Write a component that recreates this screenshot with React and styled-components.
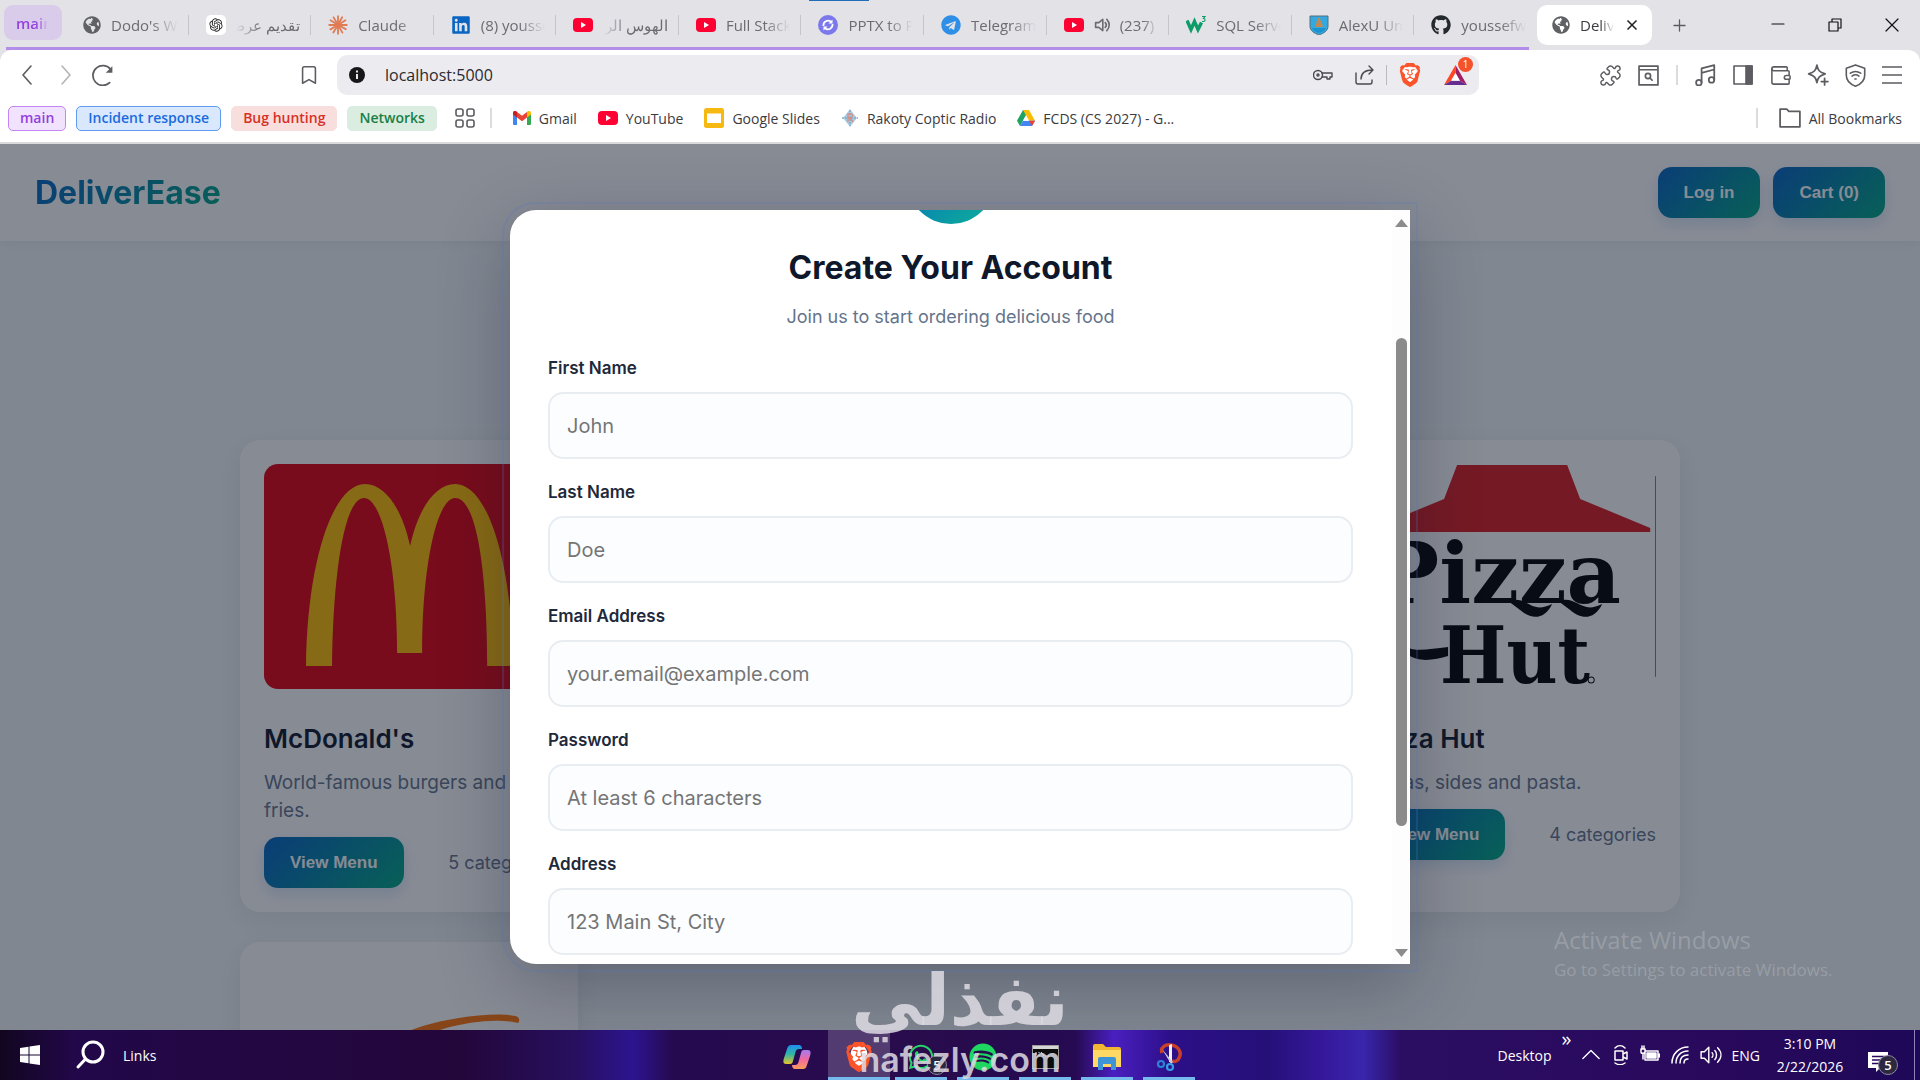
import React from 'react';
import styled, { createGlobalStyle, css } from 'styled-components';
import { Bookmark, Puzzle, Wallet, Plus, X } from 'lucide-react';
import { FaGithub, FaLinkedin, FaTelegram, FaWhatsapp, FaSpotify, FaGlobeAmericas } from 'react-icons/fa';
import { RiOpenaiFill } from 'react-icons/ri';
import { SiBrave } from 'react-icons/si';

const uiFont = '"Open Sans", "Noto Sans", sans-serif';
const pageFont = 'Inter, sans-serif';
const brandGradient = 'linear-gradient(135deg, #0563c4, #00a884)';

const GlobalStyle = createGlobalStyle`
	* {
		box-sizing: border-box;
	}
	body {
		margin: 0;
		overflow: hidden;
		font-family: ${uiFont};
	}
	button, input {
		font-family: inherit;
	}
	h1, h2, h3, p {
		margin: 0;
	}
	svg {
		display: block;
		flex-shrink: 0;
	}
`;

const Screen = styled.div`
	height: 100vh;
	display: flex;
	flex-direction: column;
	overflow: hidden;
	position: relative;
	background-color: #e3e2e7;
`;

/* ---------- tab strip ---------- */
const TabStrip = styled.div`
	height: 50px;
	display: flex;
	align-items: stretch;
	position: relative;
	flex-shrink: 0;
`;
const GroupChip = styled.button`
	width: 58px;
	height: 35px;
	margin: 5px 4px 0;
	padding: 0 14px 0 12px;
	display: flex;
	align-items: center;
	border: none;
	border-radius: 9px;
	background-color: #d9cbea;
	color: #9540e2;
	font-size: 15px;
	font-weight: 600;
`;
const GroupTabs = styled.div`
	flex: 0 1 1471px;
	display: flex;
	min-width: 0;
`;
const GroupLine = styled.div`
	position: absolute;
	left: 6px;
	right: 391px;
	bottom: 0;
	height: 3px;
	background-color: #b28ee8;
`;
const LoadLine = styled.div`
	position: absolute;
	left: 809px;
	top: 0;
	width: 60px;
	height: 1px;
	background-color: #1f6db8;
`;
const fade = css`
	mask-image: linear-gradient(${(p) => (p.$rtl ? 'to left' : 'to right')}, #000 60%, transparent);
`;
const Tab = styled.button`
	flex: 1 1 0;
	min-width: 0;
	height: 20px;
	margin-top: 15px;
	padding: 0 10px 0 17px;
	display: flex;
	align-items: center;
	gap: 10px;
	border: none;
	border-right: 1px solid ${(p) => (p.$last ? 'transparent' : '#c6c5cb')};
	background: none;
	color: #6b6b70;
	font-size: 15px;
`;
const TabTitle = styled.span`
	flex: 1;
	min-width: 0;
	overflow: hidden;
	white-space: nowrap;
	direction: ${(p) => (p.$rtl ? 'rtl' : 'ltr')};
	text-align: ${(p) => (p.$rtl ? 'right' : 'left')};
	${fade}
`;
const ActiveTab = styled.div`
	width: 115px;
	height: 40px;
	margin-top: 5px;
	padding: 0 12px 0 15px;
	display: flex;
	align-items: center;
	gap: 10px;
	border-radius: 10px;
	background-color: #fff;
	color: #3c3c40;
	font-size: 15px;
`;
const BareButton = styled.button`
	width: ${(p) => p.$w || 20}px;
	padding: 0;
	display: flex;
	align-items: center;
	justify-content: center;
	border: none;
	background: none;
	color: ${(p) => p.$color || '#5c5c61'};
`;
const NewTab = styled.div`
	height: 40px;
	margin: 5px 0 0 17px;
	display: flex;
`;
const WindowButtons = styled.div`
	height: 40px;
	margin: 5px 0 0 auto;
	display: flex;
`;

/* ---------- toolbar ---------- */
const Toolbar = styled.div`
	height: 50px;
	padding: 0 17px 0 16px;
	display: flex;
	align-items: center;
	flex-shrink: 0;
	border-radius: 12px 12px 0 0;
	background-color: #fff;
`;
const NavButtons = styled.div`
	display: flex;
	gap: 16px;
`;
const BookmarkSlot = styled.div`
	margin: 0 18px 0 auto;
`;
const AddressBar = styled.div`
	flex: 0 1 1142px;
	height: 40px;
	padding: 0 12px 0 12px;
	display: flex;
	align-items: center;
	border-radius: 10px;
	background-color: #ecebf0;
`;
const Url = styled.input`
	flex: 1;
	min-width: 0;
	margin-left: 20px;
	padding: 0;
	border: none;
	outline: none;
	background: none;
	color: #2a2a2e;
	font-size: 16px;
`;
const AddressTools = styled.div`
	display: flex;
	align-items: center;
	gap: 22px;
	color: #4a4a4f;
`;
const Divider = styled.span`
	width: ${(p) => p.$w || 1}px;
	height: 20px;
	background-color: ${(p) => p.$color || '#b9b9be'};
`;
const AddressDivider = styled(Divider)`
	margin: 0 -11px;
`;
const ToolbarDivider = styled(Divider)`
	margin: 0 2px;
`;
const BatWrap = styled.span`
	position: relative;
	display: block;
`;
const BatBadge = styled.span`
	position: absolute;
	left: 14px;
	top: -8px;
	width: 15px;
	height: 15px;
	border-radius: 50%;
	background-color: #f5512c;
	color: #fff;
	font-size: 10px;
	line-height: 15px;
	text-align: center;
`;
const ToolbarRight = styled.div`
	flex: 0 0 auto;
	margin-left: 120px;
	display: flex;
	align-items: center;
	gap: 15px;
`;

/* ---------- bookmarks ---------- */
const Bookmarks = styled.div`
	height: 44px;
	padding: 0 18px 6px 8px;
	display: flex;
	align-items: center;
	flex-shrink: 0;
	border-bottom: 2px solid #dadadd;
	background-color: #fff;
`;
const BookmarkGroup = styled.button`
	height: 25px;
	margin-right: 10px;
	padding: 0 11px;
	border: 1px solid ${(p) => p.$line};
	border-radius: 5px;
	background-color: ${(p) => p.$fill};
	color: ${(p) => p.$ink};
	font-size: 14px;
	font-weight: 600;
	line-height: 20px;
	white-space: nowrap;
`;
const BookmarkLink = styled.a`
	margin-left: 21px;
	display: flex;
	align-items: center;
	gap: 8px;
	color: #3b3b40;
	font-size: 14px;
	text-decoration: none;
	white-space: nowrap;
`;
const AllBookmarks = styled.div`
	margin-left: auto;
	display: flex;
	align-items: center;
`;
const GridSlot = styled.div`
	margin: 0 15px 0 8px;
`;

/* ---------- web page ---------- */
const Stage = styled.div`
	flex: 1;
	min-height: 0;
	position: relative;
	overflow: hidden;
	background-color: #f1f7f8;
	font-family: ${pageFont};
`;
const Header = styled.header`
	padding: 23px 35px;
	display: flex;
	align-items: center;
	gap: 13px;
	background-color: #fff;
	box-shadow: 0 2px 12px rgba(15, 23, 42, 0.06);
`;
const Brand = styled.h1`
	margin-right: auto;
	background: ${brandGradient};
	background-clip: text;
	color: transparent;
	font-size: 32px;
	font-weight: 700;
	line-height: 36px;
`;
const Button = styled.button`
	height: 51px;
	padding: 0 26px;
	border: none;
	border-radius: 14px;
	background: ${brandGradient};
	box-shadow: 0 6px 16px rgba(5, 99, 196, 0.16);
	color: #fff;
	font-family: 'Liberation Sans', sans-serif;
	font-size: 17px;
	font-weight: 700;
	white-space: nowrap;
`;
const Grid = styled.main`
	max-width: 1440px;
	margin: 199px auto 0;
	display: grid;
	grid-template-columns: repeat(4, 1fr);
	gap: 30px 29px;
`;
const Card = styled.article`
	grid-column: ${(p) => p.$column};
	padding: 24px;
	border-radius: 20px;
	background-color: #fff;
	box-shadow: 0 8px 28px rgba(15, 23, 42, 0.08);
`;
const Photo = styled.div`
	height: 225px;
	border-radius: 14px;
	overflow: hidden;
	background-color: ${(p) => p.$fill || '#fff'};
`;
const CardTitle = styled.h3`
	margin-top: 33px;
	color: #0f172a;
	font-size: 26px;
	font-weight: 600;
	line-height: 34px;
`;
const CardText = styled.p`
	margin-top: 13px;
	padding-right: 8px;
	color: #64748b;
	font-size: 19px;
	line-height: 28px;
`;
const CardFoot = styled.div`
	margin-top: 12px;
	display: flex;
	align-items: center;
	justify-content: space-between;
	color: #64748b;
	font-size: 18px;
`;

/* ---------- modal ---------- */
const Overlay = styled.div`
	position: absolute;
	inset: 0;
	display: flex;
	align-items: center;
	justify-content: center;
	background-color: rgba(15, 23, 42, 0.5);
`;
const Modal = styled.section`
	width: 100%;
	max-width: 900px;
	height: 85%;
	display: flex;
	border-radius: 26px 0 0 26px;
	background-color: #fff;
	box-shadow: 0 20px 70px rgba(15, 23, 42, 0.3);
	outline: 2px solid rgba(80, 120, 200, 0.22);
	outline-offset: 6px;
`;
const ModalBody = styled.form`
	flex: 1;
	min-width: 0;
	padding: 0 39px 0 38px;
	overflow: hidden;
`;
const Avatar = styled.div`
	width: 88px;
	height: 88px;
	margin: -74px auto 0;
	border-radius: 50%;
	background: linear-gradient(135deg, #0563c4, #0ca2a0 80%);
`;
const ModalTitle = styled.h2`
	margin-top: 22px;
	color: #0f172a;
	font-size: 32px;
	font-weight: 700;
	line-height: 44px;
	text-align: center;
`;
const ModalText = styled.p`
	margin-top: 13px;
	color: #64748b;
	font-size: 18px;
	line-height: 28px;
	text-align: center;
`;
const Fields = styled.div`
	margin-top: 25px;
	display: flex;
	flex-direction: column;
	gap: 21px;
`;
const Field = styled.div`
	display: flex;
	flex-direction: column;
	gap: 11px;
`;
const Label = styled.label`
	color: #1e293b;
	font-size: 17px;
	font-weight: 600;
	line-height: 25px;
`;
const TextBox = styled.input`
	width: 100%;
	height: 67px;
	padding: 0 17px;
	border: 2px solid #e8edf2;
	border-radius: 15px;
	outline: none;
	background-color: #fbfdff;
	font-size: 20px;
	&::placeholder {
		color: #757575;
	}
`;
const ScrollTrack = styled.div`
	width: 18px;
	padding: 9px 3px 7px 4px;
	display: flex;
	flex-direction: column;
	align-items: center;
	justify-content: space-between;
	background-color: #fdfdfd;
`;
const ScrollThumbArea = styled.div`
	flex: 1;
	width: 11px;
	padding: 111px 0 123px;
`;
const ScrollThumb = styled.div`
	height: 100%;
	border-radius: 6px;
	background-color: #8b8b8b;
`;

/* ---------- marks over the screen ---------- */
const Activate = styled.div`
	position: absolute;
	right: 82px;
	bottom: 48px;
	width: 284px;
	color: rgba(255, 255, 255, 0.2);
	font-family: ${uiFont};
	font-size: 17px;
	line-height: 25px;
	white-space: nowrap;
`;
const ActivateTitle = styled.div`
	font-size: 24px;
	line-height: 34px;
`;
const Watermark = styled.div`
	position: absolute;
	left: 0;
	right: 0;
	bottom: 0;
	height: 120px;
	display: flex;
	flex-direction: column;
	align-items: center;
	color: rgba(222, 220, 228, 0.85);
	pointer-events: none;
`;
const WatermarkArabic = styled.div`
	font-family: 'DejaVu Sans', sans-serif;
	font-size: 71px;
	font-weight: 700;
	line-height: 82px;
	white-space: nowrap;
`;
const WatermarkLatin = styled.div`
	font-family: Inter, sans-serif;
	font-size: 34px;
	font-weight: 600;
	line-height: 36px;
`;

/* ---------- taskbar ---------- */
const Taskbar = styled.footer`
	height: 50px;
	display: flex;
	align-items: stretch;
	flex-shrink: 0;
	background: linear-gradient(90deg, #12061f 0, #22084a 4%, #230745 10%, #23063a 24%, #27105f 30%, #2c1490 33%, #260a50 35%, #280c4c 48%, #260a52 56%, #4a1fc0 58%, #2c0f88 61%, #251078 66%, #36189c 69%, #3826ac 71%, #2b0d62 73%, #28095c 90%, #1e0858 100%);
	color: #fff;
	font-size: 14px;
`;
const TaskLeft = styled.div`
	flex: 1;
	padding-left: 20px;
	display: flex;
	align-items: center;
`;
const SearchSlot = styled.div`
	margin: 0 18px 0 35px;
`;
const TaskApps = styled.div`
	padding-left: 26px;
	display: flex;
	align-items: stretch;
`;
const TaskApp = styled.button`
	width: 62px;
	padding: 0 ${(p) => (p.$active ? 0 : 5)}px;
	border: none;
	position: relative;
	display: flex;
	flex-direction: column;
	align-items: center;
	justify-content: space-between;
	background-color: ${(p) => (p.$active ? 'rgba(255, 255, 255, 0.2)' : 'transparent')};
	&::before {
		content: '';
		height: 7px;
	}
	&::after {
		content: '';
		width: 100%;
		height: 3px;
		background-color: ${(p) => (p.$open ? '#76b9ed' : 'transparent')};
	}
`;
const Count = styled.span`
	position: absolute;
	left: ${(p) => p.$x}px;
	top: ${(p) => p.$y}px;
	width: 20px;
	height: 20px;
	border: 1px solid #8a86a0;
	border-radius: 50%;
	background-color: #2b2840;
	color: #fff;
	font-size: 13px;
	font-weight: 600;
	line-height: 18px;
	text-align: center;
`;
const Tray = styled.div`
	flex: 1;
	display: flex;
	align-items: center;
	justify-content: flex-end;
	gap: 10px;
`;
const Clock = styled.div`
	width: 80px;
	line-height: 23px;
	text-align: center;
`;
const More = styled.span`
	align-self: flex-start;
	font-size: 20px;
	line-height: 18px;
`;
const Notice = styled.button`
	position: relative;
	width: 44px;
	height: 50px;
	padding: 13px 0 0 8px;
	border: none;
	background: none;
`;
const ShowDesktop = styled.div`
	width: 6px;
	height: 50px;
	border-left: 1px solid #8d84b5;
`;

/* ---------- icons ---------- */
function Line({ size = 20, w = 1.6, children, color = 'currentColor', box = 20 }) {
	return (
		<svg width={size} height={size} viewBox={`0 0 ${box} ${box}`} fill="none" stroke={color} strokeWidth={w} strokeLinecap="round" strokeLinejoin="round">
			{children}
		</svg>
	);
}

function YouTubeIcon() {
	return (
		<svg width="20" height="20" viewBox="0 0 20 20">
			<rect y="3" width="20" height="14" rx="4" fill="#ff0033" />
			<path d="M8 7l5 3-5 3z" fill="#fff" />
		</svg>
	);
}

function ClaudeIcon() {
	const rays = [0, 28, 58, 90, 118, 150, 180, 212, 240, 270, 302, 330];
	return (
		<Line color="#e07b53" w={1.8}>
			{rays.map((a) => (
				<path key={a} d="M10 10V1.2" transform={`rotate(${a} 10 10)`} />
			))}
		</Line>
	);
}

function OpenAiIcon() {
	return (
		<svg width="20" height="20" viewBox="0 0 20 20">
			<rect width="20" height="20" rx="5" fill="#fff" />
			<RiOpenaiFill x="2" y="2" size={16} color="#222" />
		</svg>
	);
}

function ConvertIcon() {
	return (
		<svg width="20" height="20" viewBox="0 0 20 20" fill="none">
			<circle cx="10" cy="10" r="10" fill="#7b78ec" />
			<path d="M5.5 11a4.6 4.6 0 0 1 7.5-4.2M14.5 9a4.6 4.6 0 0 1-7.5 4.2" stroke="#fff" strokeWidth="1.8" />
			<path d="M14.5 4.5v4h-4zM5.5 15.5v-4h4z" fill="#fff" />
		</svg>
	);
}

function SchoolsIcon() {
	return (
		<svg width="20" height="20" viewBox="0 0 20 20" fill="none" stroke="#0d9c68">
			<path d="M1 5.5l4 9 3.500-8 3.500 8 3.500-7" strokeWidth="3.4" />
			<path d="M16 1.500h3l-1.500 2c2 0 2 3 0 3h-1.500" strokeWidth="1.200" />
		</svg>
	);
}

function CrestIcon() {
	return (
		<svg width="20" height="20" viewBox="0 0 20 20">
			<path d="M1 1h18v10c0 5-4 7-9 9-5-2-9-4-9-9z" fill="#35a9df" stroke="#55707e" />
			<path d="M9 3h2l.5 3h1v3h1v3h-7V9h1V6h1z" fill="#c08a52" />
			<path d="M3 13h14c-1 3-4 4-7 5-3-1-6-2-7-5z" fill="#1a93cf" />
		</svg>
	);
}

function GmailIcon() {
	return (
		<svg width="18" height="14" viewBox="0 0 18 14">
			<path d="M0 2.500V13a1 1 0 0 0 1 1h3V5z" fill="#4285f4" />
			<path d="M18 2.500V13a1 1 0 0 1-1 1h-3V5z" fill="#34a853" />
			<path d="M0 2c0-2 2-2.600 3.400-1.500L9 4.700 14.600.5 14 6.500l-5 3.800-5-3.800z" fill="#ea4335" />
			<path d="M14 1l.6-.5C16 -.6 18 0 18 2v1.500l-4 3z" fill="#fbbc04" />
			<path d="M0 2v1.500l4 3V1L3.400.5C2-.6 0 0 0 2z" fill="#c5221f" />
		</svg>
	);
}

function SlidesIcon() {
	return (
		<svg width="20" height="20" viewBox="0 0 20 20">
			<rect width="20" height="20" rx="2.500" fill="#f5b912" />
			<rect x="3" y="5.500" width="14" height="9.500" fill="#fff" />
		</svg>
	);
}

function RakotyIcon() {
	return (
		<svg width="18" height="20" viewBox="0 0 18 20">
			<path d="M9 1l3 4 4 5-4 5-3 4-3-4-4-5 4-5z" fill="#a9cbe0" />
			<path d="M1 10h16M9 2v16" stroke="#7faecb" strokeWidth="1.500" strokeDasharray="2 1" />
			<path d="M7 14V6h2.500c2.500 0 2.500 3.500 0 4H7M9 10l3 4" stroke="#d88f86" strokeWidth="1.400" fill="none" />
		</svg>
	);
}

function DriveIcon() {
	return (
		<svg width="18" height="16" viewBox="0 0 18 16">
			<path d="M6 0h6l-3 5.300L3 16 0 10.700z" fill="#1ea362" />
			<path d="M6 0h6l6 10.700h-6z" fill="#fbbc04" />
			<path d="M3 16l3-5.300h12L15 16z" fill="#4285f4" />
			<path d="M18 10.700L15 16l-3-5.300z" fill="#ea4335" />
			<path d="M9 5.300l3 5.400H6z" fill="#fff" />
		</svg>
	);
}

function BraveIcon({ size }) {
	return (
		<svg width={size} height={size} viewBox="0 0 24 24">
			<ellipse cx="12" cy="11" rx="7" ry="9" fill="#fff" />
			<SiBrave size={24} color="#fb542b" />
		</svg>
	);
}

function BatIcon() {
	return (
		<svg width="23" height="20" viewBox="0 0 23 20">
			<path d="M11.500 0L0 20l7.500-4.500L11.500 8z" fill="#ff4724" />
			<path d="M0 20h23l-7.500-4.500h-8z" fill="#662d91" />
			<path d="M11.500 0L23 20l-7.500-4.500L11.500 8z" fill="#9e1f63" />
			<path d="M11.500 8l4.500 7.800H7z" fill="#fff" />
		</svg>
	);
}

function ArchesArt() {
	return (
		<svg width="100%" height="225" viewBox="0 0 290 225" preserveAspectRatio="xMidYMid slice">
			<path
				d="M42 202C43 100 68 20 101 20c20 0 37 25 45 62 8-37 25-62 45-62 33 0 57 80 58 182h-26c0-92-10-168-32-168-18 0-33 66-33 155h-25c0-89-15-155-33-155-20 0-31 76-32 168z"
				fill="#ffbd00"
			/>
		</svg>
	);
}

function HutArt() {
	return (
		<svg width="100%" height="225" viewBox="0 0 290 225" preserveAspectRatio="xMidYMid slice">
			<path d="M91 1h110l13 34 70 29v4H8v-4l70-29z" fill="#db1d20" />
			<g fontWeight="700">
				<text x="10" y="139" fontSize="84" fontFamily="'DejaVu Serif', serif">Pizza</text>
				<text x="74" y="219" fontSize="78" fontFamily="'DejaVu Serif Condensed', 'DejaVu Serif', serif">Hut</text>
			</g>
			<path d="M142 137c20-6 22 14 44 3-8 17-22 15-32 6zM192 137c20-6 22 14 44 3-8 17-22 15-32 6z" />
			<path d="M32 174c8 16 24 12 50 9v9c-20 6-44 8-50-18z" />
			<circle cx="225" cy="216" r="3" fill="none" stroke="#000" />
			<path d="M289.500 12v201" stroke="#555" />
		</svg>
	);
}

function SwooshArt() {
	return (
		<svg width="100%" height="225" viewBox="0 0 290 225" preserveAspectRatio="xMidYMin slice">
			<path d="M138 68c30-15 90-23 113-18 4 1 5 4 3 7-20-5-50-1-72 5-14 4-30 12-44 20z" fill="#ff7508" />
		</svg>
	);
}

function CopilotIcon() {
	return (
		<svg width="28" height="26" viewBox="0 0 28 26">
			<defs>
				<linearGradient id="cpA" x1="0" y1="0" x2="0" y2="1">
					<stop offset="0" stopColor="#1b8ff0" />
					<stop offset="0.5" stopColor="#34b7a0" />
					<stop offset="1" stopColor="#e8c32a" />
				</linearGradient>
				<linearGradient id="cpB" x1="0" y1="0" x2="0" y2="1">
					<stop offset="0" stopColor="#a47bf2" />
					<stop offset="0.5" stopColor="#f06aa0" />
					<stop offset="1" stopColor="#fb9a5a" />
				</linearGradient>
			</defs>
			<path d="M8 1h8c2 0 3 2 3 4h-3c-2 0-3 1-3.500 3L10 17c-.5 2-1 3-3 3H3c-3 0-3-3-2-6L4 5c1-3 2-4 4-4z" fill="url(#cpA)" />
			<path d="M20 25h-8c-2 0-3-2-3-4h3c2 0 3-1 3.500-3L18 9c.5-2 1-3 3-3h4c3 0 3 3 2 6l-3 9c-1 3-2 4-4 4z" fill="url(#cpB)" />
		</svg>
	);
}

function CmdIcon() {
	return (
		<svg width="27" height="24" viewBox="0 0 27 24">
			<rect x="0.500" y="0.500" width="26" height="23" fill="#0c0c0c" stroke="#9a9a9a" />
			<rect x="1" y="1" width="25" height="3" fill="#d5d5d5" />
			<path d="M4 7v3M7 7v1M7 10v1M9 7l3 4M13 11h4" stroke="#eee" />
		</svg>
	);
}

function FolderIcon() {
	return (
		<svg width="28" height="26" viewBox="0 0 28 26">
			<path d="M0 2a2 2 0 0 1 2-2h8l3 3h13a2 2 0 0 1 2 2v17H0z" fill="#f2b632" />
			<path d="M0 6h28v17H0z" fill="#ffd964" />
			<path d="M5 26V15a2 2 0 0 1 2-2h14a2 2 0 0 1 2 2v11h-5v-6h-8v6z" fill="#3d94d6" />
		</svg>
	);
}

function SnipIcon() {
	return (
		<svg width="26" height="30" viewBox="0 0 26 30" fill="none">
			<path d="M6 11C4 5 10 2 15 3c8 1 11 8 8 13-1 3-4 4-7 3" stroke="#c9402a" strokeWidth="3.500" />
			<path d="M13 3l3-1v18h-3z" fill="#f1f1f1" />
			<path d="M6 7l11 13-2 2z" fill="#c9ced6" />
			<circle cx="5" cy="22" r="3" stroke="#2a84d2" strokeWidth="2.200" />
			<circle cx="14" cy="25" r="3" stroke="#35a0ea" strokeWidth="2.200" />
		</svg>
	);
}

const tabs = [
	{ title: "Dodo's We", icon: <FaGlobeAmericas size={18} color="#5f6165" /> },
	{ title: 'تقديم عرض', icon: <OpenAiIcon />, rtl: true },
	{ title: 'Claude', icon: <ClaudeIcon /> },
	{ title: '(8) yousse', icon: <FaLinkedin size={20} color="#0a66c2" /> },
	{ title: 'الهوس الر', icon: <YouTubeIcon />, rtl: true },
	{ title: 'Full Stack', icon: <YouTubeIcon /> },
	{ title: 'PPTX to P', icon: <ConvertIcon /> },
	{ title: 'Telegram', icon: <FaTelegram size={20} color="#2f8fe6" /> },
	{ title: '(237)', icon: <YouTubeIcon />, sound: true },
	{ title: 'SQL Serve', icon: <SchoolsIcon /> },
	{ title: 'AlexU Uni', icon: <CrestIcon /> },
	{ title: 'youssefw', icon: <FaGithub size={20} color="#24292e" /> },
];

const groups = [
	{ name: 'main', fill: '#f1e2fd', line: '#c386f5', ink: '#9340dd' },
	{ name: 'Incident response', fill: '#d9e8fc', line: '#5f9cf0', ink: '#1b6be0' },
	{ name: 'Bug hunting', fill: '#f8dfde', line: '#f8dfde', ink: '#d93025' },
	{ name: 'Networks', fill: '#dbece1', line: '#dbece1', ink: '#188045' },
];

const links = [
	{ name: 'Gmail', icon: <GmailIcon /> },
	{ name: 'YouTube', icon: <YouTubeIcon /> },
	{ name: 'Google Slides', icon: <SlidesIcon /> },
	{ name: 'Rakoty Coptic Radio', icon: <RakotyIcon /> },
	{ name: 'FCDS (CS 2027) - G...', icon: <DriveIcon /> },
];

const fields = [
	{ id: 'first', label: 'First Name', hint: 'John', type: 'text' },
	{ id: 'last', label: 'Last Name', hint: 'Doe', type: 'text' },
	{ id: 'email', label: 'Email Address', hint: 'your.email@example.com', type: 'email' },
	{ id: 'password', label: 'Password', hint: 'At least 6 characters', type: 'password' },
	{ id: 'address', label: 'Address', hint: '123 Main St, City', type: 'text' },
];

function BrowserChrome() {
	return (
		<>
			<TabStrip>
				<GroupChip>
					<TabTitle>main</TabTitle>
				</GroupChip>
				<GroupTabs>
					{tabs.map((t, i) => (
						<Tab key={t.title} $last={i === tabs.length - 1}>
							{t.icon}
							{t.sound && (
								<Line size={16} w={2}>
									<path d="M2 7h4l5-4v14l-5-4H2zM14 7c2 2 2 4 0 6M16 3c4 4 4 10 0 14" />
								</Line>
							)}
							<TabTitle $rtl={t.rtl}>{t.title}</TabTitle>
						</Tab>
					))}
				</GroupTabs>
				<ActiveTab>
					<FaGlobeAmericas size={18} color="#5f6165" />
					<TabTitle>DeliverEase</TabTitle>
					<BareButton $w={16} $color="#222" aria-label="Close tab">
						<X size={16} strokeWidth={2.5} />
					</BareButton>
				</ActiveTab>
				<NewTab>
					<BareButton aria-label="New tab">
						<Plus size={19} strokeWidth={1.6} />
					</BareButton>
				</NewTab>
				<WindowButtons>
					<BareButton $w={57} $color="#111" aria-label="Minimize">
						<Line size={14} w={1.2} box={14}><path d="M1 6h12" /></Line>
					</BareButton>
					<BareButton $w={57} $color="#111" aria-label="Restore">
						<Line size={14} w={1.2} box={14}><path d="M1 4h9v9H1zM4 4V1h9v9h-3" /></Line>
					</BareButton>
					<BareButton $w={57} $color="#111" aria-label="Close">
						<Line size={14} w={1.2} box={14}><path d="M1 1l12 12M13 1L1 13" /></Line>
					</BareButton>
				</WindowButtons>
				<GroupLine />
				<LoadLine />
			</TabStrip>

			<Toolbar>
				<NavButtons>
					<BareButton $w={22} aria-label="Back">
						<Line><path d="M14 1L6 10l8 9" /></Line>
					</BareButton>
					<BareButton $w={22} $color="#b5b5b9" aria-label="Forward">
						<Line><path d="M7 1l8 9-8 9" /></Line>
					</BareButton>
					<BareButton $w={22} aria-label="Reload">
						<Line size={22}>
							<path d="M17 5A9 9 0 1 0 16 17" />
							<path d="M18.500 2v6h-6z" fill="currentColor" stroke="none" />
						</Line>
					</BareButton>
				</NavButtons>
				<BookmarkSlot>
					<BareButton aria-label="Bookmark">
						<Bookmark size={22} strokeWidth={1.7} />
					</BareButton>
				</BookmarkSlot>
				<AddressBar>
					<svg width="16" height="16" viewBox="0 0 16 16">
						<circle cx="8" cy="8" r="8" fill="#17171a" />
						<path d="M8 3.500v2M8 7v5" stroke="#fff" strokeWidth="1.800" />
					</svg>
					<Url aria-label="Address" defaultValue="localhost:5000" />
					<AddressTools>
						<Line w={1.4}>
							<circle cx="5" cy="10" r="4.500" />
							<circle cx="5" cy="10" r="1" />
							<path d="M9 8h10v4h-2v2h-3v-2H9" />
						</Line>
						<Line w={1.4}>
							<path d="M1 8v9a2 2 0 0 0 2 2h12a2 2 0 0 0 2-2v-2M6 14c0-6 4-9 12-9M14 1l4 4-4 4" />
						</Line>
						<AddressDivider />
						<BraveIcon size={24} />
						<BatWrap>
							<BatIcon />
							<BatBadge>1</BatBadge>
						</BatWrap>
					</AddressTools>
				</AddressBar>
				<ToolbarRight>
					<BareButton $w={23} aria-label="Extensions">
						<Puzzle size={23} strokeWidth={1.5} />
					</BareButton>
					<BareButton $w={22} aria-label="Find">
						<Line size={21}>
							<path d="M1 1h18v18H1zM1 4.500h18" />
							<circle cx="9.500" cy="10.500" r="2.500" />
							<path d="M11.500 12.500l2 2" />
						</Line>
					</BareButton>
					<ToolbarDivider $w={2} $color="#dcdcdf" />
					<BareButton $w={22} aria-label="Playlist">
						<Line size={22}>
							<circle cx="3.500" cy="17" r="2.500" />
							<circle cx="15" cy="14.500" r="2.500" />
							<path d="M6 17V4l11.500-3v13.500M6 8l11.500-3" />
						</Line>
					</BareButton>
					<BareButton $w={22} aria-label="Sidebar">
						<Line>
							<path d="M1 1h18v18H1z" />
							<path d="M13 1h6v18h-6z" fill="currentColor" />
						</Line>
					</BareButton>
					<BareButton $w={23} aria-label="Wallet">
						<Wallet size={23} strokeWidth={1.6} />
					</BareButton>
					<BareButton $w={22} aria-label="Leo">
						<Line size={22}>
							<path d="M9 1c1 5 2 6 7.500 8-5.500 2-6.500 3-7.500 8-1-5-2-6-7.500-8C7 7 8 6 9 1z" />
							<path d="M16 13v6M13 16h6" />
						</Line>
					</BareButton>
					<BareButton $w={22} aria-label="VPN">
						<Line size={23} w={1.4}>
							<path d="M10 0.800l8 3v6c0 5-4 8-8 9.500-4-1.500-8-4.500-8-9.500v-6z" />
							<path d="M5.500 8c3-2 6-2 9 0M7 10.500c2-1.500 4-1.500 6 0M9.500 13h1" />
						</Line>
					</BareButton>
					<BareButton $w={22} aria-label="Menu">
						<Line><path d="M0 2h20M0 10h20M0 18h20" /></Line>
					</BareButton>
				</ToolbarRight>
			</Toolbar>

			<Bookmarks>
				{groups.map((g) => (
					<BookmarkGroup key={g.name} $fill={g.fill} $line={g.line} $ink={g.ink}>
						{g.name}
					</BookmarkGroup>
				))}
				<GridSlot>
					<Line color="#5c5c61">
						<rect x="1" y="1" width="7" height="7" rx="2" />
						<rect x="12" y="1" width="7" height="7" rx="2" />
						<rect x="1" y="12" width="7" height="7" rx="2" />
						<rect x="12" y="12" width="7" height="7" rx="2" />
					</Line>
				</GridSlot>
				<Divider $w={2} $color="#dcdcdf" />
				{links.map((l) => (
					<BookmarkLink key={l.name} href="#">
						{l.icon}
						{l.name}
					</BookmarkLink>
				))}
				<AllBookmarks>
					<Divider $w={2} $color="#dcdcdf" />
					<BookmarkLink href="#">
						<Line size={22} color="#5c5c61"><path d="M1 2h6l2 2h10v14H1z" /></Line>
						All Bookmarks
					</BookmarkLink>
				</AllBookmarks>
			</Bookmarks>
		</>
	);
}

function RestaurantCard({ column, art, fill, name, text, count }) {
	return (
		<Card $column={column}>
			<Photo $fill={fill}>{art}</Photo>
			<CardTitle>{name}</CardTitle>
			<CardText>{text}</CardText>
			<CardFoot>
				<Button>View Menu</Button>
				<span>{count} categories</span>
			</CardFoot>
		</Card>
	);
}

function SignUpModal() {
	return (
		<Overlay>
			<Modal>
				<ModalBody>
					<Avatar />
					<ModalTitle>Create Your Account</ModalTitle>
					<ModalText>Join us to start ordering delicious food</ModalText>
					<Fields>
						{fields.map((f) => (
							<Field key={f.id}>
								<Label htmlFor={f.id}>{f.label}</Label>
								<TextBox id={f.id} type={f.type} placeholder={f.hint} />
							</Field>
						))}
					</Fields>
				</ModalBody>
				<ScrollTrack>
					<svg width="13" height="8" viewBox="0 0 13 8"><path d="M6.500 0L13 8H0z" fill="#8b8b8b" /></svg>
					<ScrollThumbArea>
						<ScrollThumb />
					</ScrollThumbArea>
					<svg width="13" height="8" viewBox="0 0 13 8"><path d="M6.500 8L13 0H0z" fill="#8b8b8b" /></svg>
				</ScrollTrack>
			</Modal>
		</Overlay>
	);
}

function WindowsTaskbar() {
	return (
		<Taskbar>
			<TaskLeft>
				<svg width="20" height="20" viewBox="0 0 20 20" fill="#fff">
					<path d="M0 3l8.500-1.200v7.700H0zM9.500 1.600L20 0v9.500H9.500zM0 10.500h8.500v7.700L0 17zM9.500 10.500H20V20L9.500 18.400z" />
				</svg>
				<SearchSlot>
					<Line size={30} w={3} box={30}>
						<circle cx="18" cy="12" r="10" />
						<path d="M10.500 19L3 27" />
					</Line>
				</SearchSlot>
				Links
			</TaskLeft>
			<TaskApps>
				<TaskApp aria-label="Copilot"><CopilotIcon /></TaskApp>
				<TaskApp aria-label="Brave" $active $open><BraveIcon size={30} /></TaskApp>
				<TaskApp aria-label="WhatsApp" $open>
					<FaWhatsapp size={28} color="#25d366" />
					<Count $x={37} $y={25}>5</Count>
				</TaskApp>
				<TaskApp aria-label="Spotify" $open><FaSpotify size={28} color="#1ed760" /></TaskApp>
				<TaskApp aria-label="Command Prompt" $open><CmdIcon /></TaskApp>
				<TaskApp aria-label="File Explorer" $open><FolderIcon /></TaskApp>
				<TaskApp aria-label="Snipping Tool" $open><SnipIcon /></TaskApp>
			</TaskApps>
			<Tray>
				Desktop
				<More>»</More>
				<Line size={18} w={1.5}><path d="M1 14l9-9 9 9" /></Line>
				<Line w={1.5}>
					<path d="M5 6h8v9H5zM13 9l4-2v7l-4-2M5 3c3-3 7-3 10 0M5 18c3 2 7 2 10 0" />
				</Line>
				<Line w={1.5}>
					<path d="M5 6h13v9H5zM19.500 9v3M1 4h4v3c0 2-4 2-4 0zM2 4V1M4 4V1M3 8v6" />
					<path d="M7 8h9v5H7z" fill="#fff" />
				</Line>
				<Line w={1.5}>
					<path d="M2 18C2 9 9 2 18 2M6 18c0-7 5-12 12-12M10 18c0-5 3-8 8-8M14 18c0-2 1-4 4-4" />
				</Line>
				<Line size={22} w={1.3}>
					<path d="M1 7h3l4-4v14l-4-4H1zM11 8c1 1 1 3 0 4M13.500 6c2 2 2 6 0 8M16 3.500c4 4 4 9 0 13" />
				</Line>
				ENG
				<Clock>
					3:10 PM
					<br />
					2/22/2026
				</Clock>
				<Notice aria-label="Notifications">
					<svg width="20" height="20" viewBox="0 0 20 20">
						<path d="M0 0h20v16h-8l-4 4v-4H0z" fill="#fff" />
						<path d="M4 4.500h12M4 8h12M4 11.500h8" stroke="#28095c" strokeWidth="1.400" />
					</svg>
					<Count $x={18} $y={25}>5</Count>
				</Notice>
				<ShowDesktop />
			</Tray>
		</Taskbar>
	);
}

function App() {
	return (
		<Screen>
			<GlobalStyle />
			<BrowserChrome />
			<Stage>
				<Header>
					<Brand>DeliverEase</Brand>
					<Button>Log in</Button>
					<Button>Cart (0)</Button>
				</Header>
				<Grid>
					<RestaurantCard column={1} art={<ArchesArt />} fill="#e0000f" name="McDonald's" text="World-famous burgers and fries." count={5} />
					<RestaurantCard column={4} art={<HutArt />} name="Pizza Hut" text="Pizzas, sides and pasta." count={4} />
					<Card $column={1}>
						<Photo>
							<SwooshArt />
						</Photo>
					</Card>
				</Grid>
				<SignUpModal />
				<Activate>
					<ActivateTitle>Activate Windows</ActivateTitle>
					Go to Settings to activate Windows.
				</Activate>
			</Stage>
			<WindowsTaskbar />
			<Watermark>
				<WatermarkArabic>نفذلي</WatermarkArabic>
				<WatermarkLatin>nafezly.com</WatermarkLatin>
			</Watermark>
		</Screen>
	);
}

export default App;
